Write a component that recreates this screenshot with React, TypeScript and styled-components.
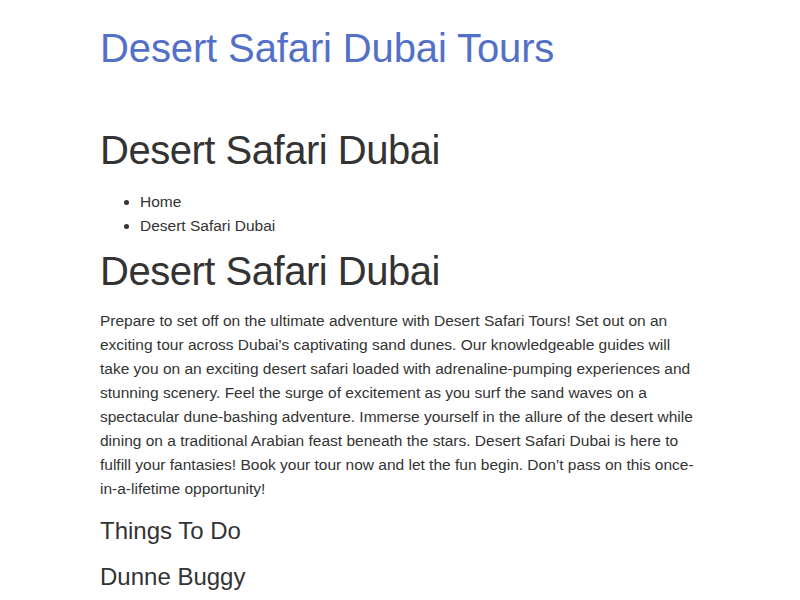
import React from "react";
import styled, { createGlobalStyle } from "styled-components";

const Global = createGlobalStyle`
  html, body { margin: 0; padding: 0; background: #fff; }
  body {
    font-family: "Liberation Sans", Arial, Helvetica, sans-serif;
    font-size: 15.5px;
    line-height: 24px;
    color: #333;
  }
`;

const Page = styled.div`
  width: 597px;
  margin: 0 103px 0 100px;
`;

const SiteHeader = styled.header`
  padding: 26px 0 0;
  height: 128px;
  box-sizing: border-box;
`;

const SiteTitle = styled.a`
  display: block;
  font-size: 40px;
  line-height: 44px;
  letter-spacing: -0.003em;
  color: #5370c8;
  text-decoration: none;
`;

const PageTitle = styled.h1`
  margin: 0 0 18px;
  font-size: 40px;
  line-height: 44px;
  letter-spacing: -0.012em;
  font-weight: 400;
`;

const Crumbs = styled.ul`
  margin: 0 0 11px;
  padding-left: 40px;
`;

const Crumb = styled.li``;

const Heading = styled.h2`
  margin: 0 0 16px;
  font-size: 40px;
  line-height: 44px;
  letter-spacing: -0.012em;
  font-weight: 400;
`;

const Para = styled.p`
  margin: 0 0 17px;
`;

const SubHeading = styled.h3`
  margin: 0 0 20px;
  font-size: 24px;
  line-height: 26px;
  font-weight: 400;
`;

export default function App() {
  return (
    <>
      <Global />
      <Page>
        <SiteHeader>
          <SiteTitle href="#">Desert Safari Dubai Tours</SiteTitle>
        </SiteHeader>
        <PageTitle>Desert Safari Dubai</PageTitle>
        <Crumbs>
          <Crumb>Home</Crumb>
          <Crumb>Desert Safari Dubai</Crumb>
        </Crumbs>
        <Heading>Desert Safari Dubai</Heading>
        <Para>
          Prepare to set off on the ultimate adventure with Desert Safari Tours! Set out on an
          exciting tour across Dubai’s captivating sand dunes. Our knowledgeable guides will
          take you on an exciting desert safari loaded with adrenaline-pumping experiences and
          stunning scenery. Feel the surge of excitement as you surf the sand waves on a
          spectacular dune-bashing adventure. Immerse yourself in the allure of the desert while
          dining on a traditional Arabian feast beneath the stars. Desert Safari Dubai is here to
          fulfill your fantasies! Book your tour now and let the fun begin. Don’t pass on this
          once-in-a-lifetime opportunity!
        </Para>
        <SubHeading>Things To Do</SubHeading>
        <SubHeading>Dunne Buggy</SubHeading>
      </Page>
    </>
  );
}
